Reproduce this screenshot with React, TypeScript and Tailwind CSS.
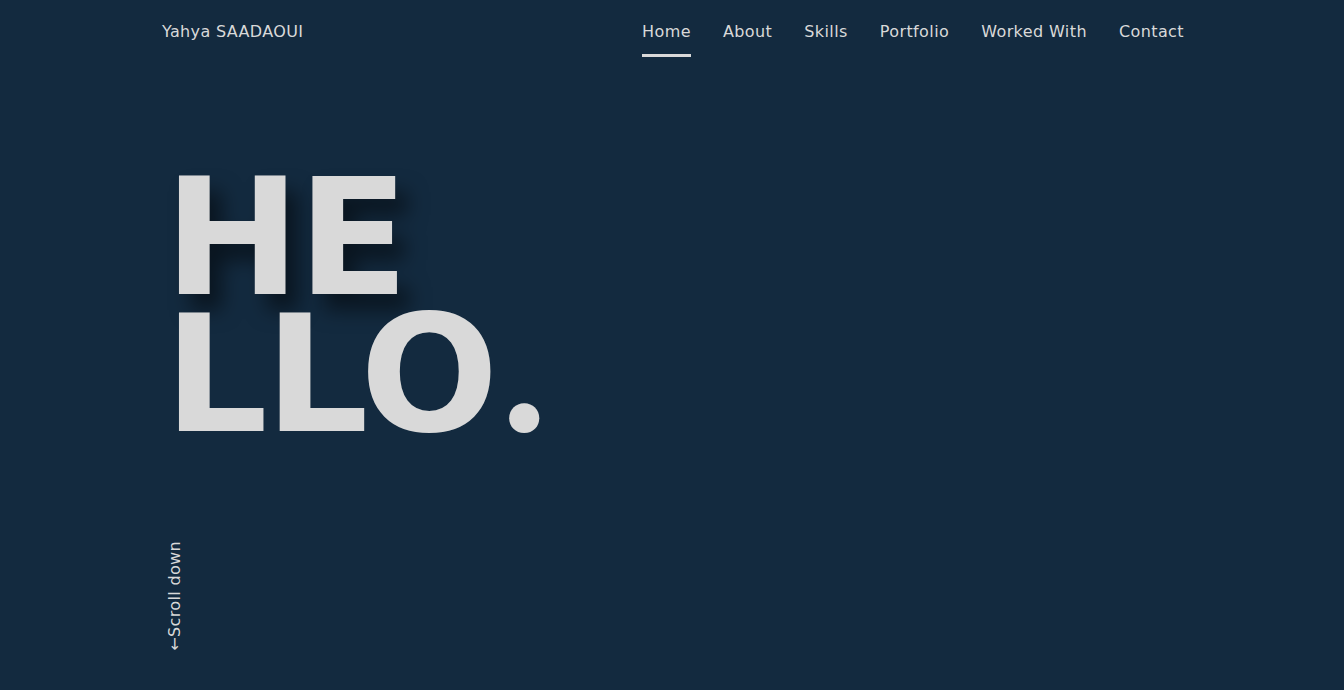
import React from "react";

const links = ["Home", "About", "Skills", "Portfolio", "Worked With", "Contact"];

export default function App() {
    return (
        <div className="min-h-screen w-full bg-[#132a3f] text-[#d9d9d9] font-['DejaVu_Sans',sans-serif]">
            <div className="mx-auto w-[1024px]">
                <header className="flex items-start justify-between h-[61px]">
                    <a className="pl-[2px] pt-[22px] text-[16px] leading-[20px] tracking-[0.35px]">Yahya SAADAOUI</a>
                    <nav className="flex gap-[32px] pt-[22px]">
                        {links.map((l, i) => (
                            <a
                                key={l}
                                className={
                                    i === 0
                                        ? "text-[16px] leading-[20px] tracking-[0.4px] pb-[12px] border-b-[3px] border-[#d9d9d9]"
                                        : "text-[16px] leading-[20px] tracking-[0.4px] pb-[12px] border-b-[3px] border-transparent"
                                }
                            >
                                {l}
                            </a>
                        ))}
                    </nav>
                </header>

                <section className="pt-[110px] pl-[4px]">
                    <h1 className="font-bold text-[163px] leading-[134px] tracking-[-3px] text-[#d9d9d9]">
                        <span className="[text-shadow:12px_16px_20px_rgba(0,0,0,0.5)]">HE</span>
                        <br />
                        <span>LLO<span className="font-['Inter',sans-serif] font-extrabold">.</span></span>
                    </h1>
                </section>

                <div className="pt-[99px] pl-[7px]">
                    <span className="inline-block [writing-mode:vertical-rl] rotate-180 text-[16px] leading-[16px] tracking-[0.35px]">
                        ←Scroll down
                    </span>
                </div>
            </div>
        </div>
    );
}
